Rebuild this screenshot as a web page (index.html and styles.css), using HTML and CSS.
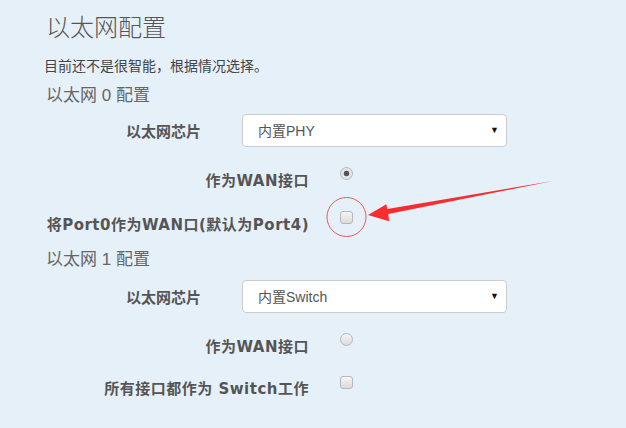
FILE: index.html
```html
<!DOCTYPE html>
<html lang="zh-CN">
<head>
  <meta charset="UTF-8" />
  <title>以太网配置</title>
  <link rel="stylesheet" href="styles.css">
</head>
<body>

  <div class="page">
    <!-- 标题 -->
    <h2 class="title">以太网配置</h2>
    <p class="hint">目前还不是很智能，根据情况选择。</p>

    <!-- 以太网 0 -->
    <div class="section-title">以太网 0 配置</div>

    <div class="select-row">
      <label class="select-label">以太网芯片</label>
      <div class="select-box">
        <select class="chip-select">
          <option>内置PHY</option>
        </select>
        <span class="select-arrow">▼</span>
      </div>
    </div>

    <div class="check-row">
      <label class="check-label">作为WAN接口</label>
      <input type="radio" name="wan" class="radio" checked>
    </div>

    <div class="check-row">
      <label class="check-label">将Port0作为WAN口(默认为Port4)</label>
      <input type="checkbox" class="checkbox">
    </div>

    <!-- 以太网 1 -->
    <div class="section-title second">以太网 1 配置</div>

    <div class="select-row">
      <label class="select-label">以太网芯片</label>
      <div class="select-box">
        <select class="chip-select">
          <option>内置Switch</option>
        </select>
        <span class="select-arrow">▼</span>
      </div>
    </div>

    <div class="check-row">
      <label class="check-label">作为WAN接口</label>
      <input type="radio" name="wan" class="radio">
    </div>

    <div class="check-row last">
      <label class="check-label">所有接口都作为 Switch工作</label>
      <input type="checkbox" class="checkbox">
    </div>
  </div>

  <!-- 标注 -->
  <svg class="mark" width="626" height="428" viewBox="0 0 626 428">
    <circle cx="346.5" cy="217" r="19.5" fill="none" stroke="#f0585c" stroke-width="1"/>
    <polygon points="368,215 386.3,204.3 387.3,209 553,181 388.2,214 389.2,221.3" fill="#fb2c2f"/>
  </svg>

</body>
</html>
```

FILE: styles.css
```css
body {
  margin: 0;
  padding: 0;
  background: #e6f0f9;
  font-family: "Liberation Sans", "Noto Sans CJK SC", sans-serif;
  color: #555;
  position: relative;
  height: 428px;
  overflow: hidden;
}

.page {
  padding: 12px 0 0 44px;
}

.title {
  margin: 0 0 12px 2px;
  font-size: 24px;
  font-weight: 300;
  line-height: 32px;
  color: #555;
}

.hint {
  margin: 0 0 10px;
  font-size: 14px;
  line-height: 20px;
  color: #444;
}

.section-title {
  margin: 0 0 8px 2px;
  font-size: 17px;
  line-height: 20px;
  color: #666;
}

.section-title.second {
  margin-top: 15px;
  margin-bottom: 10px;
}

/* 下拉框一行 */
.select-row {
  display: flex;
  align-items: center;
  gap: 41px;
}

.select-label {
  width: 157px;
  text-align: right;
  font-size: 15px;
  font-weight: bold;
  color: #555;
}

.select-box {
  position: relative;
  width: 265px;
}

.chip-select {
  display: block;
  width: 100%;
  height: 33px;
  padding: 0 30px 0 15px;
  border: 1px solid #ccc;
  border-radius: 4px;
  background: #fff;
  font-family: inherit;
  font-size: 14px;
  color: #555;
  appearance: none;
  -webkit-appearance: none;
  box-sizing: border-box;
}

.select-arrow {
  position: absolute;
  right: 8px;
  top: 11px;
  font-size: 9px;
  color: #111;
  pointer-events: none;
}

/* 单选/复选一行 */
.check-row {
  display: flex;
  align-items: flex-start;
  gap: 31px;
  margin-top: 24px;
}

.check-row.last {
  margin-top: 22px;
}

.check-label {
  width: 265px;
  text-align: right;
  font-family: "DejaVu Sans", "Noto Sans CJK SC", sans-serif;
  font-size: 15px;
  font-weight: bold;
  letter-spacing: 0.5px;
  line-height: 20px;
  color: #555;
}

.radio,
.checkbox {
  appearance: none;
  -webkit-appearance: none;
  margin: -4px 0 0;
  width: 13px;
  height: 13px;
  border: 1px solid #b8b8b8;
  background: linear-gradient(#f6f6f6, #dadada);
  box-sizing: border-box;
}

.radio {
  border-radius: 50%;
}

.radio:checked {
  background: radial-gradient(circle, #555 0, #555 2.5px, #e9e9e9 3.2px, #dcdcdc 100%);
}

.checkbox {
  border-radius: 3px;
}

.check-row.last .checkbox {
  margin-top: -3px;
}

.mark {
  position: absolute;
  top: 0;
  left: 0;
  pointer-events: none;
}
```
